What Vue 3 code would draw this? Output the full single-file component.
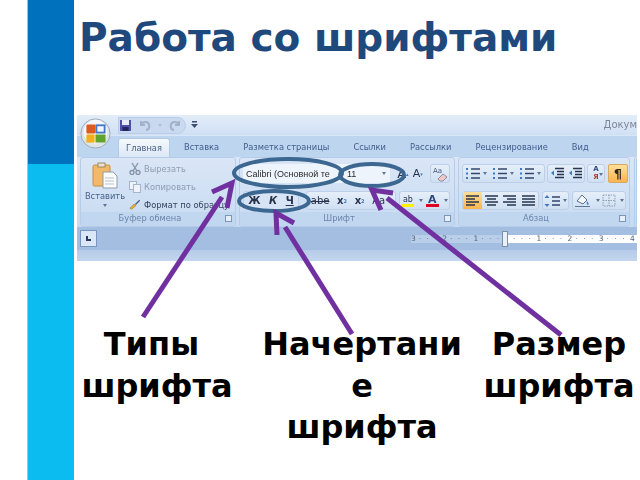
<template>
  <div class="slide">
    <aside class="stripe">
      <div class="stripe-top"></div>
      <div class="stripe-bottom"></div>
    </aside>

    <main class="content">
      <h1>Работа со шрифтами</h1>

      <section class="ribbon">
        <div class="titlebar">
          <div class="office-btn">
            <svg width="31" height="31" viewBox="0 0 34 34">
              <circle cx="17" cy="17" r="16" fill="#dfe4ea" stroke="#9aa6b4" />
              <circle cx="17" cy="15" r="13" fill="#f6f7f9" />
              <rect x="7" y="7" width="10" height="10" rx="1.500" fill="#e05a1c" />
              <rect x="18" y="8" width="9" height="8" fill="#f3f5f8" stroke="#3f78c8" stroke-width="2" />
              <rect x="7" y="18" width="9" height="9" fill="#f2b01e" />
              <rect x="17" y="18" width="11" height="9" rx="1" fill="#62a32e" />
            </svg>
          </div>
          <div class="quick">
            <svg width="13" height="13" viewBox="0 0 13 13">
              <rect x="1" y="1" width="11" height="11" fill="#4d4fa8" />
              <rect x="3" y="1" width="7" height="5" fill="#e8ecf6" />
              <rect x="3.500" y="8" width="6" height="4" fill="#23255f" />
            </svg>
            <svg width="14" height="12" viewBox="0 0 14 12" fill="none" stroke="#a3b2c8" stroke-width="2">
              <path d="M3 2v4h4M3.500 6A4 4 0 1 1 8 11" />
            </svg>
            <span class="quick-dot"></span>
            <svg width="14" height="12" viewBox="0 0 14 12" fill="none" stroke="#a3b2c8" stroke-width="2">
              <path d="M11 2v4H7M10.500 6A4 4 0 1 0 6 11" />
            </svg>
          </div>
          <span class="quick-more">
            <svg width="7" height="8" viewBox="0 0 7 8" fill="#3c4f6e">
              <rect x="1" y="0" width="5" height="1.500" />
              <path d="M0 3h7L3.500 7z" />
            </svg>
          </span>
          <span class="doc-title">Докум</span>
        </div>

        <nav class="tabs">
          <span v-for="tab in tabs" :key="tab.name" class="tab" :class="{ active: tab.active }">{{ tab.name }}</span>
        </nav>

        <div class="groups">
          <div class="group clipboard">
            <div class="group-body clip-body">
              <div class="paste">
                <svg width="26" height="27" viewBox="0 0 26 27">
                  <rect x="1" y="3" width="17" height="21" rx="1.500" fill="#f2b968" stroke="#c48f43" />
                  <rect x="6" y="1" width="7" height="4" fill="#e8e2d0" stroke="#9b8a63" />
                  <path d="M11 10h10l4 4v12H11z" fill="#fbfcfe" stroke="#8e9bb0" />
                  <path d="M13 16h9M13 19h9M13 22h9" stroke="#b7c1d0" />
                </svg>
                <span class="paste-label">Вставить</span>
                <i class="caret"></i>
              </div>
              <div class="clip-list">
                <div class="clip-row dim">
                  <svg width="12" height="13" viewBox="0 0 12 13" fill="none" stroke="#8796ab" stroke-width="1.400">
                    <path d="M3 1l5 8M9 1L4 9" />
                    <circle cx="3" cy="10.500" r="2" />
                    <circle cx="9" cy="10.500" r="2" />
                  </svg>
                  <span>Вырезать</span>
                </div>
                <div class="clip-row dim">
                  <svg width="12" height="12" viewBox="0 0 12 12" fill="#eef3fa" stroke="#a6b4c8">
                    <rect x="0.500" y="0.500" width="7" height="8" />
                    <rect x="4.500" y="3.500" width="7" height="8" />
                  </svg>
                  <span>Копировать</span>
                </div>
                <div class="clip-row">
                  <svg width="12" height="13" viewBox="0 0 14 13">
                    <path d="M1 11l5-5 2 2-5 4z" fill="#e8b23a" stroke="#8d6a1d" stroke-width=".6" />
                    <path d="M7 6l5-5 1 1-5 5z" fill="#4a5f7d" />
                  </svg>
                  <span>Формат по образцу</span>
                </div>
              </div>
            </div>
            <div class="group-label">Буфер обмена<i class="launcher"></i></div>
          </div>

          <div class="group font">
            <div class="group-body tool-body">
              <div class="tool-row">
                <div class="field field-name">Calibri (Основной те</div>
                <div class="field field-size">11<i class="caret"></i></div>
                <div class="btn-set size-set">
                  <span class="tool big">A<sup>▴</sup></span>
                  <span class="tool small">A<sup>▾</sup></span>
                </div>
                <div class="btn-set one">
                  <svg width="18" height="16" viewBox="0 0 18 16">
                    <text x="2" y="7" font-size="7" font-family="DejaVu Sans" fill="#44587a">Aa</text>
                    <path d="M7 13l5-5 4 3-4 4H9z" fill="#f3c6c6" stroke="#8a93a6" />
                  </svg>
                </div>
              </div>
              <div class="tool-row">
                <div class="btn-set style-set">
                  <span class="tool bold">Ж</span>
                  <span class="tool italic">К</span>
                  <span class="tool under">Ч</span>
                </div>
                <div class="btn-set effect-set">
                  <span class="tool strike">abe</span>
                  <span class="tool bold">x<sub>2</sub></span>
                  <span class="tool bold">x<sup>2</sup></span>
                  <span class="tool">Aa<i class="caret"></i></span>
                </div>
                <div class="btn-set color-set">
                  <span class="tool mark">ab<i class="swatch yellow"></i></span>
                  <i class="caret"></i>
                  <span class="tool mark fcolor">A<i class="swatch red"></i></span>
                  <i class="caret"></i>
                </div>
              </div>
            </div>
            <div class="group-label">Шрифт<i class="launcher"></i></div>
          </div>

          <div class="group paragraph">
            <div class="group-body tool-body">
              <div class="tool-row">
                <div class="btn-set lists">
                  <span v-for="n in 3" :key="n" class="tool list-btn">
                    <svg width="15" height="13" viewBox="0 0 15 13" stroke="#33476b" stroke-width="1.300">
                      <path d="M5 2h9M5 6.500h9M5 11h9" />
                      <path d="M1 1v2M1 5.500v2M1 10v2" stroke="#3f78c2" stroke-width="2" />
                    </svg>
                    <i class="caret"></i>
                  </span>
                </div>
                <div class="btn-set indents">
                  <span class="tool lines" v-for="n in 2" :key="n">
                    <svg width="15" height="13" viewBox="0 0 15 13" stroke="#26344e" stroke-width="1.300">
                      <path d="M5 1.500h9M7 4.500h7M7 7.500h7M5 10.500h9" />
                      <path d="M1 6l3-2.500v5z" fill="#3f78c2" stroke="none" />
                    </svg>
                  </span>
                </div>
                <div class="btn-set sort"><span class="sort-a">A</span><span class="sort-b">Я</span><i class="caret"></i></div>
                <span class="pilcrow">¶</span>
              </div>
              <div class="tool-row">
                <div class="btn-set aligns">
                  <span v-for="(a, i) in aligns" :key="a" class="tool align" :class="{ on: i === 0 }">
                    <svg width="15" height="13" viewBox="0 0 15 13" stroke="#26344e" stroke-width="1.500">
                      <path v-for="(l, j) in a.split(',')" :key="j" :d="l" />
                    </svg>
                  </span>
                </div>
                <div class="btn-set spacing">
                  <svg width="17" height="14" viewBox="0 0 17 14" stroke="#33476b" stroke-width="1.300">
                    <path d="M8 3h8M8 7h8M8 11h8" />
                    <path d="M3 1l2.500 3h-5zM3 13l2.500-3h-5z" fill="#3f78c2" stroke="none" />
                  </svg>
                  <i class="caret"></i>
                </div>
                <div class="btn-set shade">
                  <svg width="18" height="15" viewBox="0 0 18 15">
                    <path d="M3 8l5-6 5 5-4 4z" fill="#f5f8fc" stroke="#56708f" />
                    <path d="M13 8c2 2 2 4 1 4s-2-2-1-4z" fill="#4a86c9" />
                    <path d="M1 13.500h15" stroke="#5e7898" />
                  </svg>
                  <i class="caret"></i>
                  <svg class="grid-ico" width="14" height="13" viewBox="0 0 14 13" fill="none" stroke="#8d9cb2" stroke-dasharray="1.500 1">
                    <path d="M1 1h12v11H1zM7 1v11M1 6.500h12" />
                  </svg>
                  <i class="caret"></i>
                </div>
              </div>
            </div>
            <div class="group-label">Абзац<i class="launcher"></i></div>
          </div>

          <div class="group rest"></div>
        </div>

        <div class="ruler-band">
          <div class="ruler-top">
            <span class="corner"><i></i></span>
            <div class="ruler">
              <div class="ruler-grey">
                <span v-for="(t, i) in rulerLeft" :key="i" class="tick">{{ t }}</span>
              </div>
              <div class="ruler-white">
                <span v-for="(t, i) in rulerRight" :key="i" class="tick">{{ t }}</span>
              </div>
              <i class="marker"></i>
            </div>
          </div>
          <div class="ruler-foot"></div>
        </div>
      </section>

      <div class="labels">
        <p class="label first">Типы&nbsp;<br />шрифта</p>
        <p class="label middle">Начертание<br />шрифта</p>
        <p class="label last">Размер шрифта</p>
      </div>
    </main>

    <svg class="marks" width="640" height="480" viewBox="0 0 640 480" fill="none">
      <g stroke="#3c6790" stroke-width="4">
        <ellipse cx="288" cy="173" rx="54" ry="14" />
        <ellipse cx="372" cy="175" rx="32" ry="11" />
        <ellipse cx="274" cy="201" rx="35" ry="10" />
      </g>
      <g stroke="#7030a0" stroke-width="5">
        <path d="M143 317L222 197" />
        <path d="M212 192L232 183L227 208" />
        <path d="M352 334L285 227" />
        <path d="M294 223L276 213L277 235" />
        <path d="M561 335L387 198" />
        <path d="M393 193L372 190L381 210" />
      </g>
    </svg>
  </div>
</template>

<script setup>
const tabs = [
  { name: 'Главная', active: true },
  { name: 'Вставка' },
  { name: 'Разметка страницы' },
  { name: 'Ссылки' },
  { name: 'Рассылки' },
  { name: 'Рецензирование' },
  { name: 'Вид' }
]

const aligns = [
  'M1 2h13,M1 5h9,M1 8h13,M1 11h9',
  'M1 2h13,M3 5h9,M1 8h13,M3 11h9',
  'M1 2h13,M5 5h9,M1 8h13,M5 11h9',
  'M1 2h13,M1 5h13,M1 8h13,M1 11h13'
]

const rulerLeft = ['3', '·', '·', '·', '2', '·', '·', '·', '1', '·', '·', '·']
const rulerRight = ['·', '·', '·', '1', '·', '·', '·', '2', '·', '·', '·', '3', '·', '·', '·', '4']
</script>

<style scoped>
.slide {
  position: relative;
  display: flex;
  width: 640px;
  height: 480px;
  overflow: hidden;
  background: #fff;
  font-family: "DejaVu Sans", sans-serif;
}

.stripe {
  display: flex;
  flex-direction: column;
  width: 47px;
  margin-left: 27px;
  border-left: 1px solid #9cc3d8;
  box-sizing: border-box;
}
.stripe-top {
  height: 164px;
  background: #0071bc;
}
.stripe-bottom {
  flex: 1;
  background: #0bbcf1;
}

.content {
  flex: 1;
  min-width: 0;
}

h1 {
  margin: 15px 0 0 5px;
  height: 100px;
  font-size: 39px;
  line-height: 46px;
  font-weight: 700;
  color: #1f497d;
  white-space: nowrap;
}

.ribbon {
  width: 560px;
  margin-left: 3px;
  height: 146px;
  overflow: hidden;
  filter: blur(0.45px);
  font-size: 8.300px;
  color: #4a6590;
  white-space: nowrap;
}

.titlebar {
  position: relative;
  display: flex;
  align-items: center;
  height: 20px;
  padding-left: 42px;
  background: linear-gradient(#e3edf9, #d0e0f4);
}
.office-btn {
  position: absolute;
  left: 3px;
  top: 3px;
  z-index: 1;
}
.quick {
  display: flex;
  align-items: center;
  gap: 6px;
  height: 17px;
  width: 68px;
  box-sizing: border-box;
  border-radius: 0 9px 9px 0;
  background: #c9daf0;
  border: 1px solid #b8cde8;
  margin-left: -1px;
}
.quick-dot {
  width: 0;
  height: 0;
  border: 2px solid transparent;
  border-top: 3px solid #b2c0d4;
  margin-top: 3px;
}
.quick-more {
  margin-left: 5px;
  display: flex;
}
.doc-title {
  position: absolute;
  right: 0;
  top: 4px;
  font-size: 10px;
  color: #7d8798;
}

.tabs {
  display: flex;
  align-items: flex-end;
  height: 22px;
  padding-left: 41px;
  background: #bed5f0;
  box-sizing: border-box;
  border-top: 1px solid #d9e6f6;
}
.tab {
  height: 19px;
  line-height: 18px;
  padding: 0 12px;
  color: #3f5d8c;
  box-sizing: border-box;
}
.tab.active {
  width: 52px;
  padding: 0;
  margin-right: 2px;
  text-align: center;
  background: linear-gradient(#f5f9fe, #dce8f7);
  border: 1px solid #b4cbe6;
  border-bottom: none;
  border-radius: 3px 3px 0 0;
  color: #4a5f80;
}

.groups {
  display: flex;
  gap: 3px;
  height: 70px;
  padding-left: 3px;
  background: linear-gradient(#dbe7f7, #c6daf1);
}
.group {
  display: flex;
  flex-direction: column;
  box-sizing: border-box;
  border: 1px solid #b6cde9;
  border-radius: 3px;
  background: linear-gradient(#dae6f6, #c8dbf2);
}
.group-body {
  flex: 1;
  min-height: 0;
}
.group-label {
  position: relative;
  height: 14px;
  line-height: 13px;
  padding-right: 16px;
  text-align: center;
  background: #c1d6ef;
  color: #6a86ad;
}
.launcher {
  position: absolute;
  right: 3px;
  top: 3px;
  width: 5px;
  height: 5px;
  border: 1px solid #7e95b5;
  background: #e6eef8;
}

.clipboard {
  width: 156px;
}
.clip-body {
  display: flex;
}
.paste {
  display: flex;
  flex-direction: column;
  align-items: center;
  width: 48px;
  padding-top: 4px;
  box-sizing: border-box;
}
.paste-label {
  margin-top: 2px;
  color: #455f88;
}
.paste .caret {
  margin: 3px 0 0;
}
.clip-list {
  display: flex;
  flex-direction: column;
  gap: 5px;
  padding-top: 4px;
}
.clip-row {
  display: flex;
  align-items: center;
  gap: 3px;
  height: 13px;
  color: #33435e;
}
.clip-row.dim {
  color: #8f9db2;
}

.font {
  width: 216px;
}
.paragraph {
  width: 172px;
}
.rest {
  flex: 1;
  margin-left: 1px;
}

.tool-body {
  display: flex;
  flex-direction: column;
  gap: 8px;
  padding: 6px 0 0 3px;
}
.tool-row {
  display: flex;
  align-items: center;
  gap: 3px;
  height: 19px;
}
.btn-set {
  display: flex;
  align-items: center;
  justify-content: space-around;
  height: 19px;
  box-sizing: border-box;
  border: 1px solid #bdd0e8;
  border-radius: 3px;
  background: linear-gradient(#e6eff9, #cfdff3);
}
.tool {
  display: inline-flex;
  align-items: center;
  justify-content: center;
  color: #27344b;
}
.tool sup,
.tool sub {
  font-size: 5px;
  color: #3f78c2;
}

.caret {
  display: inline-block;
  width: 0;
  height: 0;
  margin-left: 2px;
  border: 2.500px solid transparent;
  border-top: 3px solid #5d7596;
  border-bottom: none;
}

.field {
  display: flex;
  align-items: center;
  height: 19px;
  box-sizing: border-box;
  padding-left: 3px;
  background: #eef4fb;
  color: #2a2a2a;
  font-family: "Liberation Sans", sans-serif;
  font-size: 9px;
}
.field-name {
  width: 94px;
  overflow: hidden;
}
.field-size {
  width: 53px;
  margin-left: -3px;
  justify-content: space-between;
  padding: 0 4px 0 10px;
}
.size-set {
  width: 30px;
  font-size: 11px;
  background: none;
  border: none;
  margin-left: 2px;
}
.size-set .big {
  font-size: 13px;
}
.one {
  width: 20px;
  margin-left: 2px;
}

.style-set {
  width: 56px;
  margin-right: 4px;
  background: #d7e4f5;
  font-size: 10px;
}
.effect-set {
  width: 90px;
  font-size: 10px;
}
.color-set {
  flex: 1;
  margin-right: 4px;
}
.bold {
  font-weight: 700;
}
.italic {
  font-style: italic;
  font-weight: 700;
}
.under {
  text-decoration: underline;
  font-weight: 700;
}
.strike {
  text-decoration: line-through;
}
.mark {
  position: relative;
  flex-direction: column;
  font-size: 8px;
  line-height: 9px;
}
.fcolor {
  font-size: 11px;
  font-weight: 700;
  color: #2d4a80;
}
.swatch {
  display: block;
  width: 13px;
  height: 3px;
}
.yellow {
  background: #fdf000;
}
.red {
  background: #e0001c;
}

.lists {
  width: 83px;
}
.indents {
  width: 38px;
  margin-left: -1px;
}
.sort {
  width: 18px;
  margin-left: -1px;
  position: relative;
  flex-direction: column;
  font-size: 7px;
  font-weight: 700;
  line-height: 7px;
  color: #2d4a80;
}
.sort .caret {
  position: absolute;
  right: 1px;
  top: 8px;
}
.sort-b {
  color: #b03a3a;
}
.pilcrow {
  width: 20px;
  height: 19px;
  line-height: 18px;
  text-align: center;
  font-size: 13px;
  font-weight: 700;
  color: #33291a;
  background: linear-gradient(#ffdf9a, #f9b44f);
  border: 1px solid #d8a85f;
  border-radius: 2px;
  box-sizing: border-box;
}
.aligns {
  width: 77px;
}
.align {
  width: 19px;
  height: 17px;
}
.align.on {
  background: linear-gradient(#ffdf9a, #f9b44f);
}
.spacing {
  width: 27px;
  justify-content: center;
}
.shade {
  width: 54px;
  flex: none;
}

.ruler-band {
  height: 34px;
  background: #a3bee1;
}
.ruler-top {
  display: flex;
  align-items: center;
  height: 23px;
  padding: 0 0 0 3px;
}
.corner {
  display: flex;
  flex: none;
  align-items: center;
  justify-content: center;
  width: 17px;
  height: 17px;
  box-sizing: border-box;
  border: 1px solid #7796c0;
  background: #dbe7f6;
}
.corner i {
  width: 5px;
  height: 5px;
  border-left: 2px solid #2a3c5c;
  border-bottom: 2px solid #2a3c5c;
  box-sizing: border-box;
}
.ruler {
  position: relative;
  display: flex;
  align-items: center;
  flex: 1;
  min-width: 0;
  height: 8px;
  margin-left: 314px;
  font-size: 7.500px;
  color: #54657e;
}
.ruler-grey {
  display: flex;
  flex: none;
  width: 94px;
  height: 8px;
  line-height: 8px;
  background: #b9cee9;
  overflow: hidden;
}
.ruler-white {
  display: flex;
  flex: 1;
  min-width: 0;
  height: 8px;
  padding-left: 8px;
  line-height: 8px;
  background: #fff;
  overflow: hidden;
}
.tick {
  flex: 0 0 7.800px;
}
.marker {
  position: absolute;
  left: 91px;
  top: -4px;
  width: 6px;
  height: 16px;
  box-sizing: border-box;
  border: 1px solid #7e8ea6;
  background: #eaf0f8;
}
.ruler-foot {
  height: 11px;
  background: linear-gradient(#b5cbe8, #c4d6ee);
}

.labels {
  display: flex;
  margin-top: 63px;
  margin-left: 3px;
}
.label {
  margin: 0;
  font-size: 32px;
  font-weight: 700;
  line-height: 41.500px;
  color: #000;
  text-align: center;
  overflow-wrap: anywhere;
}
.first {
  width: 160px;
}
.middle {
  width: 200px;
  margin-left: 25px;
}
.last {
  width: 160px;
  margin-left: 17px;
}

.marks {
  position: absolute;
  left: 0;
  top: 0;
  pointer-events: none;
}
</style>

<style>
html,
body {
  margin: 0;
  background: #fff;
}
</style>
